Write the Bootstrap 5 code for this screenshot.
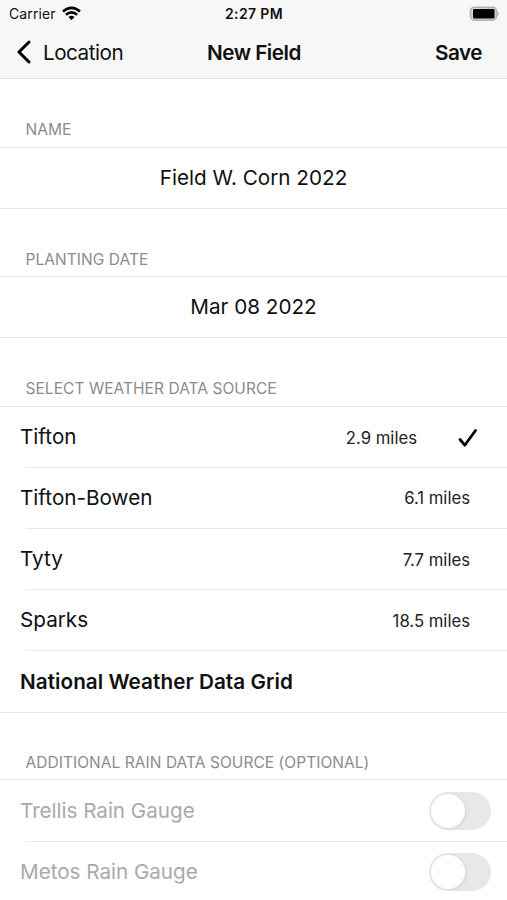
<!DOCTYPE html>
<html lang="en">
<head>
<meta charset="utf-8">
<meta name="viewport" content="width=device-width, initial-scale=1">
<title>New Field</title>
<link rel="stylesheet" href="https://cdn.jsdelivr.net/npm/bootstrap@5.3.0/dist/css/bootstrap.min.css">
<style>
  html { overflow: hidden; }
  body { font-family: Inter, "Liberation Sans", sans-serif; font-size: 20.7px; line-height: 1.2; letter-spacing: 0; color: #111; background: #fff; height: 900px; overflow: hidden; }
  .top-area { background: #f7f7f7; height: 79.4px; border-bottom: 1px solid #e2e2e3; }
  .status-line { height: 27px; font-size: 14px; letter-spacing: .1px; padding: 1px 8px 0 9px; }
  .clock { letter-spacing: .35px; }
  .wifi { margin-left: 6px; margin-top: -1px; }
  .title-line { height: 50px; padding: 2px 25px 0 16px; letter-spacing: -.5px; }
  .page-title { font-size: inherit; }
  .third { flex: 1 1 0; }
  .title-line .third:first-child { flex: 0 0 191px; }
  .back-icon { margin-top: -2px; }
  .back-text { margin-left: 11px; }
  .section-label { height: 67.3px; padding: 0 25.5px 7.6px; margin: 0; font-size: 15.5px; font-weight: 400; line-height: 19px; letter-spacing: .05px; color: #8b8b8e; }
  .last-label { height: 66.8px; }
  .rows { --bs-list-group-bg: transparent; --bs-list-group-color: #111; border-top: 1px solid #e8e8e9; border-bottom: 1px solid #e8e8e9; }
  .field-row { height: 61.2px; padding: 2px 37px 0 20px; border: 0; }
  .field-row:first-child { height: 60.2px; }
  .field-row + .field-row { background: linear-gradient(#e8e8e9, #e8e8e9) 26px 0 / 100% 1px no-repeat; }
  .single .field-row { padding: 1px 0 0; }
  .heavy { letter-spacing: .05px; }
  .miles { font-size: 16.7px; letter-spacing: 0; color: #222; }
  .tick-row { padding-right: 29px; }
  .tick { margin-left: 40px; }
  .gauge-row { color: #a9a9ab; padding-right: 16px; letter-spacing: -.04px; }
  .form-check-input.toggle { width: 62px; height: 38px; margin: -1px 0 0; padding: 2px; border: 0; background: #e8e8ea; border-radius: 19px; box-shadow: none; }
  .form-check-input.toggle::before { content: ""; display: block; width: 34px; height: 34px; border-radius: 50%; background: #fff; box-shadow: 1px 1px 4px rgba(0,0,0,.08); }
</style>
<script src="https://cdn.jsdelivr.net/npm/bootstrap@5.3.0/dist/js/bootstrap.bundle.min.js"></script>
</head>
<body>
<header class="top-area">
  <div class="status-line d-flex align-items-center">
    <div class="third d-flex align-items-center"><span>Carrier</span>
      <svg class="wifi" width="19" height="15" viewBox="0 0 19 15" fill="none" stroke="#000" stroke-width="2.6"><path d="M1 5.400Q9.500-1.800 18 5.400"/><path d="M3.900 8.700Q9.500 4 15.100 8.700"/><path d="M6.500 11.100Q9.500 8.500 12.500 11.100L9.500 14.200Z" fill="#000" stroke="none"/></svg>
    </div>
    <span class="clock fw-semibold">2:27 PM</span>
    <div class="third d-flex justify-content-end">
      <svg width="30" height="16" viewBox="0 0 30 16"><rect x="1.500" y="1.200" width="26" height="13" rx="4" fill="#d6d6d6" stroke="#b2b2b2" stroke-width="1.600"/><rect x="4" y="3" width="21.500" height="9.400" rx="1.200" fill="#000"/><path d="M28.300 5.300Q30 6 30 7.800T28.300 10.300Z" fill="#b2b2b2"/></svg>
    </div>
  </div>
  <nav class="title-line d-flex align-items-center">
    <a class="third d-flex align-items-center text-reset text-decoration-none" href="#">
      <svg class="back-icon" width="16" height="24" viewBox="0 0 16 24" fill="none" stroke="#000" stroke-width="3" stroke-linecap="round" stroke-linejoin="round"><path d="M13 2 3 12l10 10"/></svg>
      <span class="back-text">Location</span>
    </a>
    <h1 class="page-title m-0 fw-semibold">New Field</h1>
    <a class="third text-end fw-semibold text-reset text-decoration-none" href="#">Save</a>
  </nav>
</header>
<main>
  <h2 class="section-label d-flex align-items-end">NAME</h2>
  <div class="rows single list-group list-group-flush rounded-0">
    <div class="list-group-item field-row d-flex align-items-center justify-content-center"><span>Field W. Corn 2022</span></div>
  </div>
  <h2 class="section-label d-flex align-items-end">PLANTING DATE</h2>
  <div class="rows single list-group list-group-flush rounded-0">
    <div class="list-group-item field-row d-flex align-items-center justify-content-center"><span>Mar 08 2022</span></div>
  </div>
  <h2 class="section-label d-flex align-items-end">SELECT WEATHER DATA SOURCE</h2>
  <div class="rows list-group list-group-flush rounded-0">
    <div class="list-group-item field-row tick-row d-flex align-items-center"><span>Tifton</span><span class="miles ms-auto">2.9 miles</span>
      <svg class="tick" width="21" height="20" viewBox="0 0 21 20" fill="none" stroke="#000" stroke-width="2.800" stroke-linecap="round" stroke-linejoin="round"><path d="M3 11.500 7.800 17.200 18.500 2.500"/></svg></div>
    <div class="list-group-item field-row d-flex align-items-center"><span>Tifton-Bowen</span><span class="miles ms-auto">6.1 miles</span></div>
    <div class="list-group-item field-row d-flex align-items-center"><span>Tyty</span><span class="miles ms-auto">7.7 miles</span></div>
    <div class="list-group-item field-row d-flex align-items-center"><span>Sparks</span><span class="miles ms-auto">18.5 miles</span></div>
    <div class="list-group-item field-row d-flex align-items-center"><span class="heavy fw-semibold">National Weather Data Grid</span></div>
  </div>
  <h2 class="section-label last-label d-flex align-items-end">ADDITIONAL RAIN DATA SOURCE (OPTIONAL)</h2>
  <div class="rows list-group list-group-flush rounded-0">
    <label class="list-group-item field-row gauge-row d-flex align-items-center"><span>Trellis Rain Gauge</span><input class="form-check-input toggle ms-auto" type="checkbox" role="switch"></label>
    <label class="list-group-item field-row gauge-row d-flex align-items-center"><span>Metos Rain Gauge</span><input class="form-check-input toggle ms-auto" type="checkbox" role="switch"></label>
  </div>
</main>
</body>
</html>
